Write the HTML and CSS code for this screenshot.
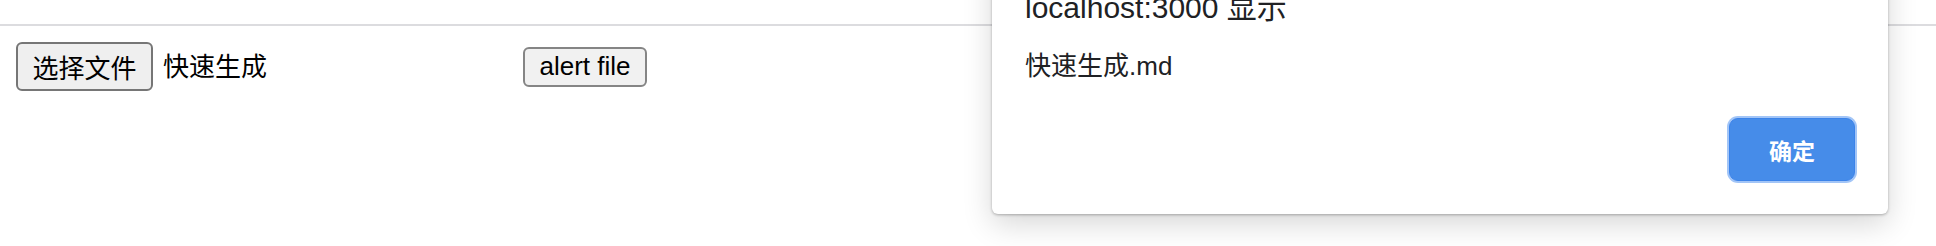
FILE: index.html
```html
<!DOCTYPE html>
<html lang="zh-CN">
<head>
<meta charset="utf-8">
<title>alert file</title>
<link rel="stylesheet" href="styles.css">
</head>
<body>
<div class="topbar"></div>
<main class="page">
  <div class="file-input">
    <button class="btn file-btn" type="button">选择文件</button>
    <span class="file-name">快速生成</span>
  </div>
  <button class="btn alert-btn" type="button">alert file</button>
</main>
<div class="dialog" role="alertdialog">
  <div class="dialog-title">localhost:3000 显示</div>
  <div class="dialog-message">快速生成.md</div>
  <div class="dialog-actions">
    <button class="ok-btn" type="button">确定</button>
  </div>
</div>
</body>
</html>
```
FILE: styles.css
```css
html, body {
  margin: 0;
  padding: 0;
  background: #ffffff;
}
body {
  width: 1936px;
  height: 246px;
  overflow: hidden;
  position: relative;
  font-family: "Liberation Sans", "Noto Sans CJK SC", sans-serif;
  color: #000;
}
.topbar {
  height: 24px;
  border-bottom: 2px solid #dcdcdf;
}
.page {
  padding: 16px;
  display: flex;
  align-items: center;
}
.file-input {
  width: 507px;
  display: flex;
  align-items: center;
  gap: 10px;
}
.btn {
  font-family: "Liberation Sans", "Noto Sans CJK SC", sans-serif;
  font-size: 26px;
  color: #000;
  background: #efefef;
  border: 2px solid #767676;
  border-radius: 6px;
  box-sizing: border-box;
  margin: 0;
  display: flex;
  align-items: center;
  justify-content: center;
}
.file-btn {
  width: 137px;
  height: 49px;
  padding: 0;
}
.file-name {
  font-size: 26px;
  line-height: 32px;
}
.alert-btn {
  width: 124px;
  height: 40px;
  padding: 0;
  border-color: #858585;
  background: #f1f1f1;
}
.dialog {
  position: absolute;
  left: 992px;
  top: -42px;
  width: 896px;
  box-sizing: border-box;
  padding: 32px 33px 33px 33px;
  background: #fff;
  border-radius: 6px;
  box-shadow: 0 10px 30px rgba(0, 0, 0, 0.16), 0 1px 3px rgba(0, 0, 0, 0.28);
  color: #202124;
  font-family: "Liberation Sans", "Noto Sans CJK SC", sans-serif;
}
.dialog-title {
  font-size: 30px;
  line-height: 36px;
}
.dialog-message {
  margin-top: 24px;
  font-size: 26px;
  line-height: 32px;
}
.dialog-actions {
  margin-top: 36px;
  display: flex;
  justify-content: flex-end;
}
.ok-btn {
  width: 126px;
  height: 63px;
  margin: 0;
  padding: 0;
  border: 1px solid #3b83ea;
  border-radius: 9px;
  background: #468ce9;
  box-shadow: 0 0 0 2px #a2c5f7;
  color: #fff;
  font-family: "Noto Sans CJK SC", sans-serif;
  font-weight: 700;
  font-size: 23px;
}
```
